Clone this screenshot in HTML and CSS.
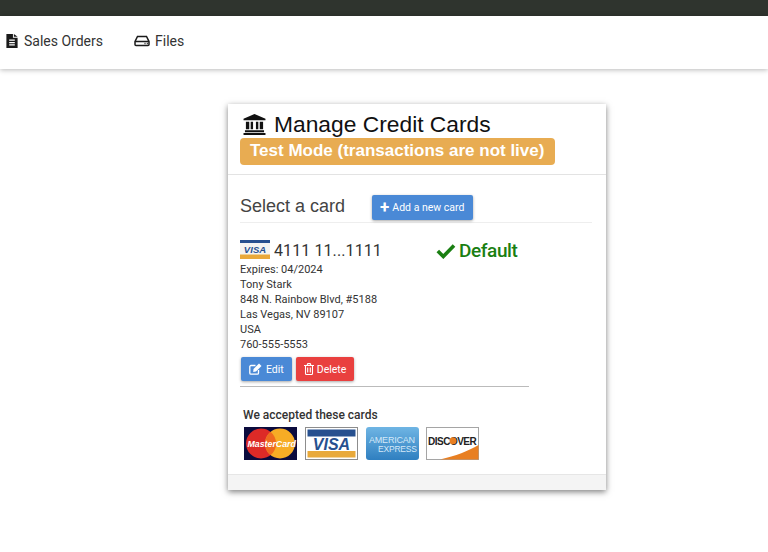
FILE: index.html
```html
<!DOCTYPE html>
<html lang="en">

<head>
    <meta charset="UTF-8">
    <meta name="viewport" content="width=device-width, initial-scale=1.0">
    <title>Manage Credit Cards</title>
    <link rel="stylesheet" href="styles.css">
</head>

<body>
    <div class="topbar"></div>

    <!-- Main nav -->
    <nav class="nav">
        <a class="nav-item">
            <svg class="nav-icon" width="12" height="14" viewBox="0 0 12 15"><path fill="#1a1a1a" d="M0 0h7v4h5v11H0zM8 0l4 3H8zM3 6v1.300h6V6zM3 8.500v1.300h6V8.500zM3 11v1.300h6V11z" fill-rule="evenodd"/></svg>
            Sales Orders
        </a>
        <a class="nav-item">
            <svg class="nav-icon" width="16" height="12" viewBox="0 0 16 12"><path fill="none" stroke="#1a1a1a" stroke-width="1.500" d="M1 6.500 3.500 1.500h9L15 6.500v3a1 1 0 0 1-1 1H2a1 1 0 0 1-1-1zM1 6.500h14"/><path stroke="#1a1a1a" stroke-width="1.300" d="M10.500 8.500h1M12.800 8.500h1"/></svg>
            Files
        </a>
    </nav>

    <main class="page">
        <section class="card">
            <header class="card-head">
                <h1>
                    <svg class="bank-icon" width="23" height="21" viewBox="0 0 24 22"><path fill="#111" d="M12 0 23.500 5v1.500H.5V5zM3 8h3.500v8H3zM8 8h2.500v8H8zM13.500 8H16v8h-2.500zM17.500 8H21v8h-3.500zM2 17h20v2H2zM.5 20h23v2H.5z"/></svg>
                    Manage Credit Cards
                </h1>
                <span class="test-mode">Test Mode (transactions are not live)</span>
            </header>

            <div class="card-body">
                <div class="select-row">
                    <h2>Select a card</h2>
                    <button class="btn btn-blue btn-add"><span class="plus">+</span> Add a new card</button>
                </div>

                <div class="saved-card">
                    <div class="saved-info">
                        <div class="card-number">
                            <svg class="visa-small" width="30" height="19" viewBox="0 0 30 19">
                                <rect width="30" height="19" fill="#f4f4f2"/>
                                <rect width="30" height="3" fill="#27508f"/>
                                <rect y="14.500" width="30" height="4.500" fill="#e9a93a"/>
                                <text x="15" y="12.500" class="logo-visa" font-size="9.500" text-anchor="middle">VISA</text>
                            </svg>
                            4111 11...1111
                        </div>
                        <p>Expires: 04/2024</p>
                        <p>Tony Stark</p>
                        <p>848 N. Rainbow Blvd, #5188</p>
                        <p>Las Vegas, NV 89107</p>
                        <p>USA</p>
                        <p>760-555-5553</p>
                    </div>
                    <div class="default-mark">
                        <svg width="20" height="16" viewBox="0 0 20 16"><path fill="none" stroke="#1a7f12" stroke-width="3.600" d="M1.800 8l5.500 5.500L18 2.500"/></svg>
                        Default
                    </div>
                </div>

                <div class="actions">
                    <button class="btn btn-blue">
                        <svg width="13" height="12" viewBox="0 0 13 12"><path fill="none" stroke="#fff" stroke-width="1.300" d="M9.500 7v3a1.200 1.200 0 0 1-1.200 1.200H2A1.200 1.200 0 0 1 .8 10V3.700A1.200 1.200 0 0 1 2 2.500h4.500"/><path fill="#fff" d="M4.500 6 10 .5 12.500 3 7 8.500l-2.800.4z"/></svg>
                        Edit
                    </button>
                    <button class="btn btn-red">
                        <svg width="10" height="12" viewBox="0 0 10 12"><path fill="none" stroke="#fff" stroke-width="1.100" d="M1.500 3v7.500a1 1 0 0 0 1 1h5a1 1 0 0 0 1-1V3M0 2.500h10M3 2.500 3.800.6h2.400L7 2.500M3.700 4.500v5M6.300 4.500v5"/></svg>
                        Delete
                    </button>
                </div>
                <hr class="divider">

                <div class="accepted">
                    <h3>We accepted these cards</h3>
                    <div class="logos">
                        <svg width="53" height="33" viewBox="0 0 53 33">
                            <rect width="53" height="33" fill="#0b0b3d"/>
                            <circle cx="17" cy="16.500" r="15" fill="#dd2a27"/>
                            <circle cx="36" cy="16.500" r="15" fill="#f6ac25"/>
                            <path fill="#ee6a1f" d="M26.500 4.800a15 15 0 0 1 0 23.400a15 15 0 0 1 0-23.400z"/>
                            <text x="3.500" y="19.500" class="logo-mc" font-size="8.800">MasterCard</text>
                        </svg>
                        <svg width="53" height="33" viewBox="0 0 53 33">
                            <rect x=".5" y=".5" width="52" height="32" fill="#fff" stroke="#8d8d8d"/>
                            <rect x="2.500" y="2.500" width="48" height="7" fill="#27508f"/>
                            <rect x="2.500" y="24" width="48" height="6.500" fill="#e9a93a"/>
                            <text x="26.500" y="22.500" class="logo-visa" font-size="16" text-anchor="middle">VISA</text>
                        </svg>
                        <svg width="53" height="33" viewBox="0 0 53 33">
                            <defs><linearGradient id="amex" x1="0" y1="0" x2="0" y2="1"><stop offset="0" stop-color="#6fb5e4"/><stop offset="1" stop-color="#2f7fc0"/></linearGradient></defs>
                            <rect width="53" height="33" rx="3" fill="url(#amex)"/>
                            <text x="3" y="15.500" class="logo-amex" font-size="9">AMERICAN</text>
                            <text x="12" y="25" class="logo-amex" font-size="8.500">EXPRESS</text>
                        </svg>
                        <svg width="53" height="33" viewBox="0 0 53 33">
                            <rect x=".5" y=".5" width="52" height="32" fill="#fff" stroke="#a5a5a5"/>
                            <path fill="#e87f22" d="M14 32.500C30 29 42 24 52.500 18v14.500z"/>
                            <text x="2" y="17.500" class="logo-disc" font-size="10">DISCOVER</text>
                            <circle cx="27" cy="13.800" r="3.500" fill="#e87f22"/>
                        </svg>
                    </div>
                </div>
            </div>

            <footer class="card-foot"></footer>
        </section>
    </main>
</body>

</html>
```

FILE: styles.css
```css
* {
    box-sizing: border-box;
}

body {
    margin: 0;
    min-height: 100vh;
    background-color: #fff;
    font-family: 'Roboto', sans-serif;
    color: #333;
}

.topbar {
    height: 16px;
    background-color: #2f342e;
}

/* Main nav */
.nav {
    display: flex;
    align-items: center;
    height: 53px;
    padding-left: 6px;
    padding-bottom: 3px;
    gap: 31px;
    background-color: #fff;
    box-shadow: 0 1px 5px rgba(0, 0, 0, 0.28);
}

.nav-item {
    display: flex;
    align-items: center;
    gap: 6px;
    font-size: 14px;
    color: #333;
}

.nav-item + .nav-item {
    gap: 5px;
}

.page {
    padding: 35px 0 30px 228px;
}

.card {
    width: 378px;
    height: 386px;
    display: flex;
    flex-direction: column;
    background-color: #fff;
    box-shadow: 0 2px 6px rgba(0, 0, 0, 0.5);
}

.card-head {
    height: 71px;
    padding: 7px 12px 0;
    border-bottom: 1px solid #e3e3e3;
}

.card-head h1 {
    display: flex;
    align-items: center;
    gap: 8px;
    margin: 0 0 0 3px;
    height: 26px;
    font-family: 'Liberation Sans', sans-serif;
    font-size: 22.8px;
    font-weight: 400;
    color: #111;
}

.test-mode {
    display: inline-block;
    height: 27px;
    margin-top: 1px;
    padding: 0 11px 0 10px;
    border-radius: 4px;
    background-color: #e8ac52;
    font-family: 'Liberation Sans', sans-serif;
    font-size: 17px;
    font-weight: 700;
    line-height: 26px;
    color: #fff;
}

.card-body {
    flex: 1;
    padding: 19px 14px 0 12px;
}

.select-row {
    display: flex;
    align-items: center;
    gap: 27px;
    height: 28px;
    padding-bottom: 3px;
}

.select-row h2 {
    margin: 0;
    font-family: 'Liberation Sans', sans-serif;
    font-size: 18px;
    font-weight: 400;
    color: #444;
}

.btn {
    display: inline-flex;
    align-items: center;
    gap: 3px;
    height: 24px;
    padding: 0 8px;
    border: none;
    border-radius: 2px;
    font-family: 'Roboto', sans-serif;
    font-size: 10.5px;
    white-space: nowrap;
    color: #fff;
    cursor: pointer;
    box-shadow: 0 1px 3px rgba(0, 0, 0, 0.35);
}

.btn-blue {
    background-color: #4a89d6;
}

.btn-red {
    background-color: #e9403f;
}

.btn-add {
    width: 101px;
    height: 25px;
    margin-top: 2px;
}

.plus {
    font-size: 17px;
    font-weight: 700;
    line-height: 1;
}

.saved-card {
    display: flex;
    padding-top: 17px;
    border-top: 1px solid #eee;
}

.saved-info {
    width: 196px;
}

.saved-info p {
    margin: 0;
    font-size: 11px;
    line-height: 15px;
    color: #333;
}

.card-number {
    display: flex;
    align-items: center;
    gap: 4px;
    height: 22px;
    padding-bottom: 1px;
    font-size: 16px;
    letter-spacing: 0.1px;
    color: #333;
}

.visa-small {
    margin-top: -2px;
}

.default-mark {
    display: flex;
    align-items: center;
    gap: 3px;
    height: 21px;
    font-size: 19px;
    font-weight: 500;
    letter-spacing: -0.4px;
    color: #1a7f12;
}

.actions {
    display: flex;
    gap: 4px;
    margin-top: 5px;
    padding-left: 1px;
}

.actions .btn {
    gap: 3px;
    height: 24px;
}

.actions .btn-blue {
    gap: 4px;
}

.divider {
    width: 289px;
    margin: 5px 0 0;
    border: none;
    border-top: 1px solid #bbb;
}

.accepted {
    margin-top: 21px;
    padding-left: 3px;
}

.accepted h3 {
    margin: 0;
    font-size: 12px;
    font-weight: 500;
    line-height: 15px;
    color: #333;
}

.logos {
    display: flex;
    gap: 8px;
    margin-top: 4px;
    padding-left: 1px;
}

.logos svg:last-child {
    margin-left: -1px;
}

.logo-visa {
    font-family: 'Liberation Sans', sans-serif;
    font-weight: 700;
    font-style: italic;
    fill: #27508f;
}

.logo-mc {
    font-family: 'Liberation Sans', sans-serif;
    font-weight: 700;
    font-style: italic;
    fill: #fff;
}

.logo-amex {
    font-family: 'Liberation Sans', sans-serif;
    letter-spacing: -0.2px;
    fill: #d5e9f8;
}

.logo-disc {
    font-family: 'Liberation Sans', sans-serif;
    font-weight: 700;
    letter-spacing: -0.5px;
    fill: #222;
}

.card-foot {
    height: 16px;
    background-color: #f4f4f4;
    border-top: 1px solid #e6e6e6;
}
```
